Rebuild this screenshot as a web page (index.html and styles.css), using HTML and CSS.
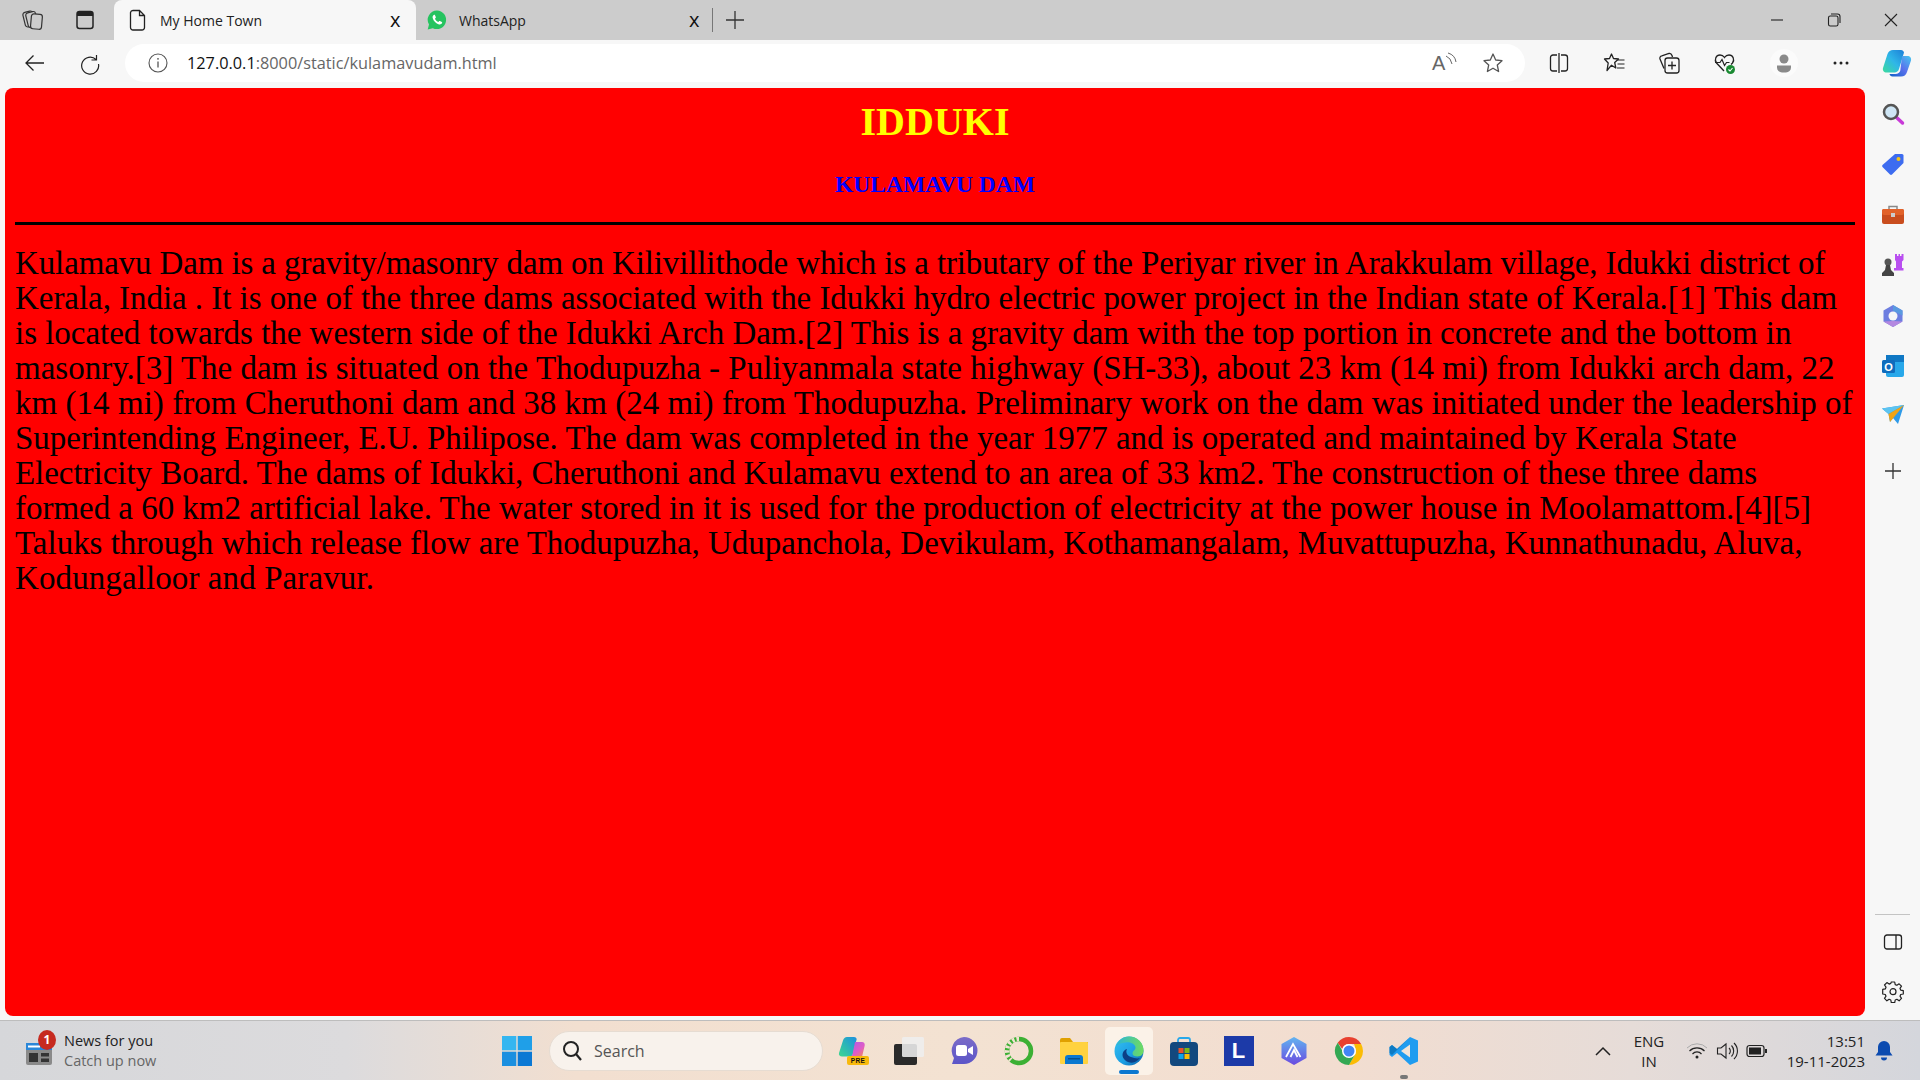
FILE: index.html
```html
<!DOCTYPE html>
<html lang="en">
<head>
<meta charset="utf-8">
<title>My Home Town</title>
<link rel="stylesheet" href="styles.css">
</head>
<body>
<div class="tabstrip">
  <div class="strip-icons">
    <svg width="24" height="24" viewBox="0 0 24 24"><g fill="#ccc" stroke="#333" stroke-width="1.200"><rect x="3" y="3.500" width="10" height="15" rx="2.500" transform="rotate(-14 8 11)"/><rect x="6" y="4" width="10" height="15" rx="2.500" transform="rotate(-14 11 12)"/><rect x="10" y="6" width="11" height="15" rx="2.500" transform="rotate(5 15 13)"/></g></svg>
    <svg width="24" height="24" viewBox="0 0 24 24"><rect x="4" y="3.500" width="16" height="17" rx="2.500" fill="none" stroke="#222" stroke-width="1.500"/><path d="M4 6a2.500 2.500 0 0 1 2.500-2.500h11A2.500 2.500 0 0 1 20 6v2H4z" fill="#222"/></svg>
  </div>
  <div class="tab tab-active">
    <svg width="18" height="22" viewBox="0 0 18 22"><path d="M4 1.500h6.500l5 5v12a2.500 2.500 0 0 1-2.500 2.500H4a2.500 2.500 0 0 1-2.500-2.500v-15A2.500 2.500 0 0 1 4 1.500zM10.500 1.500v5h5" fill="none" stroke="#222" stroke-width="1.300"/></svg>
    <span class="tab-title">My Home Town</span>
    <span class="tab-x">x</span>
  </div>
  <div class="tab">
    <svg width="22" height="22" viewBox="0 0 22 22"><path d="M11 1.500a9.300 9.300 0 0 0-8 14l-1.300 5 5.100-1.300A9.300 9.300 0 1 0 11 1.500z" fill="#25c35f"/><path d="M7.800 6c-.9.500-1.500 1.700-1.100 3.100.8 3 3.300 5.500 6.300 6.300 1.400.3 2.700-.3 3.100-1.300.2-.5.100-.9-.2-1.100l-2-1c-.4-.2-.7 0-.9.300l-.6.800c-1.500-.6-2.800-1.900-3.500-3.400l.7-.7c.3-.3.300-.6.200-.9l-.9-2c-.2-.3-.7-.3-1.100-.1z" fill="#fff"/></svg>
    <span class="tab-title">WhatsApp</span>
    <span class="tab-x">x</span>
  </div>
  <span class="tab-sep"></span>
  <svg class="newtab" width="20" height="20" viewBox="0 0 20 20"><path d="M10 1v18M1 10h18" stroke="#333" stroke-width="1.300"/></svg>
  <div class="window-ctrls">
    <svg width="16" height="16" viewBox="0 0 16 16"><path d="M2 8h12" stroke="#222" stroke-width="1.100"/></svg>
    <svg width="16" height="16" viewBox="0 0 16 16"><rect x="2.500" y="4" width="9.500" height="10" rx="1.800" fill="none" stroke="#222" stroke-width="1.100"/><path d="M5 2h6.500A2.500 2.500 0 0 1 14 4.500V11" fill="none" stroke="#222" stroke-width="1.100"/></svg>
    <svg width="16" height="16" viewBox="0 0 16 16"><path d="M2 2l12 12M14 2L2 14" stroke="#222" stroke-width="1.100"/></svg>
  </div>
</div>

<div class="toolbar">
  <div class="nav">
    <svg width="24" height="24" viewBox="0 0 24 24"><path d="M21 12H3M10.500 4.500L3 12l7.500 7.500" fill="none" stroke="#222" stroke-width="1.300"/></svg>
    <svg width="24" height="24" viewBox="0 0 24 24"><path d="M18.500 4v5h-5M18 8.500A8.500 8.500 0 1 0 20.500 13" fill="none" stroke="#222" stroke-width="1.200"/></svg>
  </div>
  <div class="address">
    <svg width="22" height="22" viewBox="0 0 22 22"><circle cx="11" cy="11" r="9" fill="none" stroke="#555" stroke-width="1.100"/><path d="M11 9.500v6" stroke="#555" stroke-width="1.300"/><circle cx="11" cy="6.800" r=".9" fill="#555"/></svg>
    <span class="url"><span class="url-host">127.0.0.1</span>:8000/static/kulamavudam.html</span>
    <span class="addr-right">
      <span class="readaloud">A<svg width="12" height="16" viewBox="0 0 12 16"><path d="M1 4q5 2 6 8M3 1q7 2 8 9" fill="none" stroke="#666" stroke-width="1"/></svg></span>
      <svg width="24" height="24" viewBox="0 0 24 24"><path d="M12 3l2.700 6 6.300.7-4.700 4.300 1.300 6.500L12 17.200 6.400 20.500l1.300-6.500L3 9.700 9.300 9z" fill="none" stroke="#555" stroke-width="1.300" stroke-linejoin="round"/></svg>
    </span>
  </div>
  <div class="tools">
    <svg width="22" height="22" viewBox="0 0 22 22"><path d="M9 3H5a2.500 2.500 0 0 0-2.500 2.500v11A2.500 2.500 0 0 0 5 19h4M13 3h4a2.500 2.500 0 0 1 2.500 2.500v11A2.500 2.500 0 0 1 17 19h-4M11 1v20" fill="none" stroke="#222" stroke-width="1.300"/></svg>
    <svg width="22" height="22" viewBox="0 0 22 22"><path d="M8.500 2l2 4.500 5 .5-3.800 3.500 1.100 5.500-4.300-2.800L4 18.500l1.200-7.500L1.500 7l5-.5z" fill="none" stroke="#222" stroke-width="1.300" stroke-linejoin="round"/><path d="M14.500 8h7M14.500 12h7M14 16h7.500" stroke="#222" stroke-width="1.200"/></svg>
    <svg width="22" height="22" viewBox="0 0 22 22"><path d="M6 16.500L2 7c-.5-1.500.3-2.800 1.800-3.200L11 1.500c1.500-.3 2.500.5 3 2l.5 1.500" fill="none" stroke="#222" stroke-width="1.300"/><rect x="7" y="6" width="14" height="15" rx="2.500" fill="#f7f7f7" stroke="#222" stroke-width="1.300"/><path d="M14 9.500v8M10 13.500h8" stroke="#222" stroke-width="1.300"/></svg>
    <svg width="24" height="24" viewBox="0 0 24 24"><path d="M11 20L3.500 12C1 8.500 3 4 7 4c2 0 3.500 1 4.500 2.500C12.500 5 14 4 16 4c4 0 6 4.500 3.500 8l-1.500 1.500" fill="none" stroke="#222" stroke-width="1.300"/><path d="M2 11.500h5l2-3 2.500 6 2-3h3" fill="none" stroke="#222" stroke-width="1.200"/><circle cx="17.500" cy="18.500" r="4.500" fill="#1a8a32"/><path d="M15.500 18.500l1.500 1.500 2.500-3" fill="none" stroke="#fff" stroke-width="1.100"/></svg>
    <svg width="28" height="30" viewBox="0 0 28 30"><circle cx="14" cy="15" r="14" fill="#fbfbfb"/><circle cx="14" cy="11" r="4.500" fill="#8a8a8a"/><path d="M7 17.500h14v2a5 5 0 0 1-5 5h-4a5 5 0 0 1-5-5z" fill="#8a8a8a"/></svg>
    <svg width="20" height="6" viewBox="0 0 20 6"><circle cx="4" cy="3" r="1.500" fill="#222"/><circle cx="10" cy="3" r="1.500" fill="#222"/><circle cx="16" cy="3" r="1.500" fill="#222"/></svg>
    <svg width="30" height="28" viewBox="0 0 30 28"><defs><linearGradient id="cp1" x1="1" y1="0" x2="0" y2="1"><stop offset="0" stop-color="#1c7fd8"/><stop offset=".5" stop-color="#2fb6e8"/><stop offset="1" stop-color="#3cdc9c"/></linearGradient><linearGradient id="cp2" x1="1" y1="0" x2="0" y2="1"><stop offset="0" stop-color="#46c8f0"/><stop offset=".5" stop-color="#5a70ec"/><stop offset="1" stop-color="#0f62c8"/></linearGradient></defs><path d="M11 1h8c1.600 0 2.600 1 3 2.500L17 20c-.6 2.200-2.400 3.500-4.500 3.500H4.500C2 23.500.3 21.500 1 19L5.500 5C6.500 2.500 8.500 1 11 1z" fill="url(#cp1)"/><path d="M20 7h5.500C28 7 29.600 9 29 11.500L25 23c-1 3-3 4.500-6 4.500h-8.500c-1.600 0-2.700-1-3-2.500h6c2.400 0 4.200-1.400 4.800-3.500z" fill="url(#cp2)"/></svg>
  </div>
</div>

<div class="main">
  <div class="page">
    <h1 class="title">IDDUKI</h1>
    <h2 class="subtitle">KULAMAVU DAM</h2>
    <hr class="rule">
    <p class="article">
      <span class="line l1">Kulamavu Dam is a gravity/masonry dam on Kilivillithode which is a tributary of the Periyar river in Arakkulam village, Idukki district of</span>
      <span class="line l2">Kerala, India . It is one of the three dams associated with the Idukki hydro electric power project in the Indian state of Kerala.[1] This dam</span>
      <span class="line l3">is located towards the western side of the Idukki Arch Dam.[2] This is a gravity dam with the top portion in concrete and the bottom in</span>
      <span class="line">masonry.[3] The dam is situated on the Thodupuzha - Puliyanmala state highway (SH-33), about 23 km (14 mi) from Idukki arch dam, 22</span>
      <span class="line l5">km (14 mi) from Cheruthoni dam and 38 km (24 mi) from Thodupuzha. Preliminary work on the dam was initiated under the leadership of</span>
      <span class="line l6">Superintending Engineer, E.U. Philipose. The dam was completed in the year 1977 and is operated and maintained by Kerala State</span>
      <span class="line l7">Electricity Board. The dams of Idukki, Cheruthoni and Kulamavu extend to an area of 33 km2. The construction of these three dams</span>
      <span class="line l8">formed a 60 km2 artificial lake. The water stored in it is used for the production of electricity at the power house in Moolamattom.[4][5]</span>
      <span class="line l9">Taluks through which release flow are Thodupuzha, Udupanchola, Devikulam, Kothamangalam, Muvattupuzha, Kunnathunadu, Aluva,</span>
      <span class="line l10">Kodungalloor and Paravur.</span>
    </p>
  </div>
  <aside class="sidebar">
    <div class="side-top">
      <svg width="24" height="24" viewBox="0 0 24 24"><path d="M14.500 14.500l7 6.500" stroke="#c83ad8" stroke-width="3.500" stroke-linecap="round"/><circle cx="10" cy="10" r="7" fill="#cfe6f5" stroke="#555" stroke-width="2.500"/></svg>
      <svg width="24" height="24" viewBox="0 0 24 24"><path d="M14 2h7a1.500 1.500 0 0 1 1.500 1.500V11L11 22.500a1.500 1.500 0 0 1-2 0L1.500 15a1.500 1.500 0 0 1 0-2z" fill="#3d6cf0"/><circle cx="17.500" cy="7" r="2" fill="#f5c518"/></svg>
      <svg width="24" height="24" viewBox="0 0 24 24"><path d="M8 6V3.500h8V6" fill="none" stroke="#888" stroke-width="1.500"/><rect x="1" y="6" width="22" height="15" rx="2" fill="#c94d1e"/><rect x="1" y="6" width="22" height="6" rx="2" fill="#e2622a"/><rect x="10" y="10" width="4" height="4" fill="#ccc"/></svg>
      <svg width="24" height="24" viewBox="0 0 24 24"><path d="M14 1h2v2h1.500V1h1.500v2h1.500V1h2v6l-1.500 1.500V15h1.500v2.500H13V15h2V8.500L14 7z" fill="#b94ff0"/><circle cx="7" cy="9" r="3.500" fill="#555"/><path d="M5 12h4l1 5 3 3v3H1v-3l3-3z" fill="#444"/></svg>
      <svg width="24" height="24" viewBox="0 0 24 24"><path d="M12 1l9.500 5.500v11L12 23l-9.500-5.500v-11z" fill="#6d7ee0"/><path d="M12 1l9.500 5.500v5L12 7z" fill="#5a9ae0"/><path d="M2.500 17.500L12 23l9.500-5.500L12 17z" fill="#b488e0"/><circle cx="12" cy="12" r="4.500" fill="#f7f7f7"/></svg>
      <svg width="24" height="24" viewBox="0 0 24 24"><rect x="5" y="1" width="18" height="22" rx="2" fill="#28a8ea"/><rect x="5" y="1" width="18" height="7" fill="#0f78c4"/><rect x="1" y="6" width="13" height="13" rx="1.500" fill="#0f6cbd"/><text class="o-letter" x="7.500" y="16.500" text-anchor="middle">O</text></svg>
      <svg width="24" height="22" viewBox="0 0 24 22"><path d="M1 4.500L23 1l-6 19-5-6-3 4-1.500-8z" fill="#2f9be8"/><path d="M1 4.500L23 1 7.500 10z" fill="#5cc4f0"/><path d="M7.500 10L23 1 9 18z" fill="#f0a416"/></svg>
      <svg class="side-plus" width="20" height="20" viewBox="0 0 20 20"><path d="M10 2v16M2 10h16" stroke="#333" stroke-width="1.300"/></svg>
    </div>
    <div class="side-bottom">
      <span class="side-rule"></span>
      <svg width="20" height="18" viewBox="0 0 20 18"><rect x="1.500" y="2" width="17" height="14" rx="2.500" fill="none" stroke="#222" stroke-width="1.300"/><path d="M13 2v14" stroke="#222" stroke-width="1.300"/></svg>
      <svg width="22" height="22" viewBox="0 0 22 22"><path d="M9.300 1.500h3.400l.5 2.600 1.700.7 2.200-1.500 2.400 2.400-1.500 2.200.7 1.700 2.600.5v3.400l-2.600.5-.7 1.700 1.500 2.200-2.400 2.400-2.200-1.500-1.700.7-.5 2.600H9.300l-.5-2.600-1.700-.7-2.200 1.500-2.400-2.400 1.500-2.200-.7-1.700-2.600-.5V8.900l2.600-.5.7-1.700-1.500-2.200 2.400-2.400 2.200 1.500 1.700-.7z" fill="none" stroke="#222" stroke-width="1.200" stroke-linejoin="round" transform="translate(0 -.5)"/><circle cx="11" cy="10.700" r="3" fill="none" stroke="#222" stroke-width="1.200"/></svg>
    </div>
  </aside>
</div>

<footer class="taskbar">
  <div class="news">
    <span class="news-icon">
      <svg width="28" height="26" viewBox="0 0 28 26"><rect x="1" y="3" width="26" height="22" rx="2" fill="#8a8a8a"/><rect x="1" y="3" width="26" height="7" fill="#2b87d8"/><rect x="3" y="5.500" width="12" height="2" fill="#fff"/><rect x="4" y="13" width="9" height="9" fill="#333"/><rect x="16" y="13" width="8" height="3.500" fill="#333"/><rect x="16" y="18.500" width="8" height="3.500" fill="#333"/></svg>
      <span class="badge">1</span>
    </span>
    <span class="news-text"><span class="news-head">News for you</span><span class="news-sub">Catch up now</span></span>
  </div>
  <svg width="30" height="30" viewBox="0 0 30 30"><rect x="0" y="0" width="14.300" height="14.300" fill="#35b6f0"/><rect x="15.700" y="0" width="14.300" height="14.300" fill="#1f9fe8"/><rect x="0" y="15.700" width="14.300" height="14.300" fill="#1a8fe0"/><rect x="15.700" y="15.700" width="14.300" height="14.300" fill="#0b78d4"/></svg>
  <div class="search">
    <svg width="22" height="24" viewBox="0 0 22 24"><circle cx="10" cy="10" r="7" fill="none" stroke="#222" stroke-width="2"/><path d="M15 15l5 6" stroke="#222" stroke-width="2.200"/></svg>
    <span>Search</span>
  </div>
  <div class="dock">
    <span class="slot"><svg width="32" height="30" viewBox="0 0 32 30"><defs><linearGradient id="pr1" x1="0" y1="1" x2="1" y2="0"><stop offset="0" stop-color="#3cd890"/><stop offset="1" stop-color="#1c90e0"/></linearGradient><linearGradient id="pr2" x1="0" y1="0" x2="1" y2="1"><stop offset="0" stop-color="#a85ce8"/><stop offset=".6" stop-color="#e05cc8"/><stop offset="1" stop-color="#f29048"/></linearGradient></defs><path d="M9 1h7c1.500 0 2.300.8 2.700 2L15 18c-.5 1.800-2 2.500-4 2.500H4C2 20.500.4 19 1 17L5 4.500C5.700 2.300 7 1 9 1z" fill="url(#pr1)"/><path d="M17 6h7c2 0 3 1.500 2.700 3.500L24 21H10.500c1.800 0 3.500-.8 4-2.500z" fill="url(#pr2)"/><rect x="9" y="20" width="22" height="9" rx="2" fill="#f8b90c"/><text class="pre" x="20" y="27" text-anchor="middle">PRE</text></svg></span>
    <span class="slot"><svg width="32" height="30" viewBox="0 0 32 30"><rect x="1" y="8" width="23" height="21" rx="2" fill="#2a2a2a"/><rect x="9" y="1" width="22" height="20" rx="1.500" fill="#eeeeee" opacity=".88"/></svg></span>
    <span class="slot"><svg width="30" height="30" viewBox="0 0 30 30"><defs><linearGradient id="tm" x1="0" y1="0" x2="0" y2="1"><stop offset="0" stop-color="#7b6cc8"/><stop offset="1" stop-color="#5b55c8"/></linearGradient></defs><path d="M15 1a13.500 13.500 0 0 1 0 27H3l2-6A13.500 13.500 0 0 1 15 1z" fill="url(#tm)"/><rect x="7" y="9" width="11" height="11" rx="2.500" fill="#fff"/><path d="M19 13l5-3v9l-5-3z" fill="#fff"/></svg></span>
    <span class="slot"><svg width="30" height="30" viewBox="0 0 30 30"><circle cx="15" cy="15" r="12" fill="none" stroke="#3cb034" stroke-width="4.500"/><path d="M15 3A12 12 0 0 0 7 24" fill="none" stroke="#f3e2d4" stroke-width="4.500" stroke-dasharray="2.500 2"/></svg></span>
    <span class="slot"><svg width="30" height="28" viewBox="0 0 30 28"><path d="M1 3a2 2 0 0 1 2-2h8l3 4h15v4H1z" fill="#e0a000"/><rect x="1" y="5" width="28" height="22" rx="1" fill="#ffd23f"/><path d="M6 27v-6a3 3 0 0 1 3-3h12a3 3 0 0 1 3 3v6z" fill="#0a78d0"/><rect x="9" y="21" width="12" height="1.500" fill="#05508c"/></svg></span>
    <span class="slot"><span class="edge-slot">
      <svg width="30" height="30" viewBox="0 0 30 30"><defs><linearGradient id="eg" x1="0" y1="0" x2="1" y2="1"><stop offset="0" stop-color="#35c1f1"/><stop offset=".6" stop-color="#1b9de2"/><stop offset="1" stop-color="#0c59a4"/></linearGradient><linearGradient id="eg2" x1="0" y1="0" x2="1" y2="0"><stop offset="0" stop-color="#2bb5d8"/><stop offset="1" stop-color="#6fdc5e"/></linearGradient></defs><circle cx="15" cy="15" r="14.500" fill="url(#eg)"/><path d="M2 11C4 4 9 .5 15 .5c8 0 14.500 6 14.500 14 0 3-2 6-6 6-3 0-5-1-5-3 0-3 3-3 3-6 0-3-5-6-10-5C7 7 4 8 2 11z" fill="url(#eg2)"/><path d="M17 21c-3-1-6-4-4-8-4 1-6 6-3 10 2 3 9 7 16-1-3 1-6 0-9-1z" fill="#0c3f86"/></svg>
      <span class="edge-bar"></span>
    </span></span>
    <span class="slot"><svg width="30" height="30" viewBox="0 0 30 30"><path d="M9 8V4a2 2 0 0 1 2-2h8a2 2 0 0 1 2 2v4" fill="none" stroke="#28a8ea" stroke-width="1.800"/><rect x="1" y="6" width="28" height="24" rx="4" fill="#12487e"/><rect x="9.500" y="12" width="5" height="5" fill="#e8502a"/><rect x="15.500" y="12" width="5" height="5" fill="#7cb518"/><rect x="9.500" y="18" width="5" height="5" fill="#0ea5e9"/><rect x="15.500" y="18" width="5" height="5" fill="#fbbc05"/></svg></span>
    <span class="slot"><span class="l-app">L</span></span>
    <span class="slot"><svg width="30" height="30" viewBox="0 0 30 30"><defs><linearGradient id="ac" x1="0" y1="0" x2="0" y2="1"><stop offset="0" stop-color="#62b4f0"/><stop offset="1" stop-color="#6a4ae0"/></linearGradient></defs><path d="M15 1l12.500 7v14L15 29 2.500 22V8z" fill="url(#ac)"/><path d="M7 21L14 8l7.500 13M11.500 21L15 14l3.500 7" fill="none" stroke="#fff" stroke-width="1.800"/></svg></span>
    <span class="slot"><svg width="30" height="30" viewBox="0 0 30 30"><path d="M15 1a14 14 0 0 1 12.120 7H15a7 7 0 0 0-6.700 5L3.700 6.700A14 14 0 0 1 15 1z" fill="#e8402f"/><path d="M27.120 8A14 14 0 0 1 15 29l6.060-10.500A7 7 0 0 0 21.060 11.500 7 7 0 0 0 20 8z" fill="#fbbc05"/><path d="M3.700 6.700l6.240 10.800A7 7 0 0 0 21.060 18.500L15 29A14 14 0 0 1 3.700 6.700z" fill="#34a853"/><circle cx="15" cy="15" r="7" fill="#fff"/><circle cx="15" cy="15" r="5.500" fill="#4285f4"/></svg></span>
    <span class="slot vscode-slot">
      <svg width="30" height="30" viewBox="0 0 30 30"><path d="M21 1l8 3.500v21L21 29 8 17l-5 4-2.500-2V11L3 9l5 4z" fill="#1f9cf0"/><path d="M21 8.500L12 15l9 6.500z" fill="#f1e4d8"/><path d="M21 1L3 19l-2.500-2V11L3 9l5 4z" fill="#0a72b8" opacity=".8"/></svg>
      <span class="run-dot"></span>
    </span>
  </div>
  <div class="tray">
    <svg width="18" height="10" viewBox="0 0 18 10"><path d="M2 9l7-7 7 7" fill="none" stroke="#222" stroke-width="1.500"/></svg>
    <span class="lang">ENG<br>IN</span>
    <div class="tray-icons">
      <svg width="22" height="18" viewBox="0 0 22 18"><path d="M1 6a14 14 0 0 1 20 0" fill="none" stroke="#aaa" stroke-width="1"/><path d="M3.500 9a10.500 10.500 0 0 1 15 0M6.500 12a6 6 0 0 1 9 0" fill="none" stroke="#222" stroke-width="1.200"/><circle cx="11" cy="15" r="1.500" fill="#222"/></svg>
      <svg width="22" height="18" viewBox="0 0 22 18"><path d="M1.500 6h3.500l5-4v14l-5-4H1.500z" fill="none" stroke="#222" stroke-width="1.100"/><path d="M13 6a4 4 0 0 1 0 6M15.500 3.500a8 8 0 0 1 0 11M18 1a11 11 0 0 1 0 16" fill="none" stroke="#222" stroke-width="1.100"/></svg>
      <svg width="22" height="14" viewBox="0 0 22 14"><rect x="1" y="1.500" width="17" height="11" rx="2.500" fill="none" stroke="#222" stroke-width="1.200"/><rect x="3" y="3.500" width="12" height="7" fill="#222"/><rect x="19" y="5" width="2" height="4" fill="#222"/></svg>
    </div>
    <span class="clock"><span>13:51</span><span>19-11-2023</span></span>
    <svg width="18" height="22" viewBox="0 0 18 22"><path d="M9 1a6 6 0 0 1 6 6v5l2.500 3.500H.5L3 12V7a6 6 0 0 1 6-6z" fill="#0c4bb0"/><path d="M6 17.500h6a3 3 0 0 1-6 0z" fill="#0c4bb0"/></svg>
  </div>
</footer>
</body>
</html>
```
FILE: styles.css
```css
* { box-sizing: border-box; }
html, body { margin: 0; height: 100%; }
body {
  width: 1920px;
  height: 1080px;
  overflow: hidden;
  display: flex;
  flex-direction: column;
  background: #f7f7f7;
  font-family: "Open Sans", "Noto Sans", sans-serif;
  color: #1c1c1c;
}
svg { display: block; flex: none; }

.tabstrip {
  height: 40px;
  flex: none;
  display: flex;
  align-items: flex-end;
  background: #cccccc;
}
.strip-icons {
  width: 114px;
  height: 40px;
  display: flex;
  align-items: center;
  gap: 28px;
  padding-left: 21px;
  flex: none;
}
.tab {
  width: 299px;
  height: 40px;
  flex: none;
  display: flex;
  align-items: center;
  gap: 11px;
  padding: 0 8px 0 10px;
  font-size: 14px;
  border-radius: 8px 8px 0 0;
}
.tab-active {
  width: 302px;
  background: #f7f7f7;
  padding-left: 15px;
  gap: 13px;
}
.tab-title { flex: 1; color: #222; }
.tab-x { font-size: 20px; line-height: 20px; width: 14px; color: #111; margin-right: 4px; }
.tab-sep { width: 1px; height: 24px; background: #777; align-self: center; flex: none; margin-left: -3px; }
.newtab { align-self: center; margin-left: 12px; }
.window-ctrls {
  margin-left: auto;
  height: 40px;
  align-self: center;
  display: flex;
  align-items: center;
  gap: 41px;
  padding-right: 21px;
}

.toolbar {
  height: 48px;
  flex: none;
  display: flex;
  align-items: center;
  padding: 0 0 3px;
}
.nav {
  width: 125px;
  display: flex;
  align-items: center;
  gap: 31px;
  padding-left: 23px;
  flex: none;
}
.address {
  width: 1400px;
  height: 38px;
  flex: none;
  display: flex;
  align-items: center;
  background: #fff;
  border-radius: 19px;
  padding: 0 20px 0 22px;
  gap: 18px;
}
.url { color: #666; font-size: 16.300px; }
.url-host { color: #111; }
.addr-right { margin-left: auto; display: flex; align-items: center; gap: 27px; }
.readaloud {
  display: flex;
  color: #666;
  font-size: 20px;
  line-height: 22px;
  width: 22px;
  font-family: "Liberation Sans", sans-serif;
}
.tools {
  flex: 1;
  display: flex;
  align-items: center;
  gap: 33px;
  padding-left: 23px;
}
.tools > svg:last-child { margin-left: -2px; }

.main { flex: 1; display: flex; min-height: 0; }
.page {
  width: 1860px;
  margin-left: 5px;
  height: 928px;
  flex: none;
  background: #ff0000;
  border-radius: 8px;
  padding: 8px 10px;
  font-family: "Liberation Serif", serif;
  overflow: hidden;
}
.title {
  margin: 0;
  padding-top: 3.500px;
  text-align: center;
  font-size: 40px;
  line-height: 44px;
  color: #ffff00;
  font-weight: 700;
}
.subtitle {
  margin: 27.500px 0 0;
  text-align: center;
  font-size: 23.500px;
  line-height: 26px;
  color: #0000ff;
  font-weight: 700;
}
.rule {
  margin: 24.500px 0 0;
  border: 0;
  height: 3px;
  background: #000;
}
.article {
  margin: 21px 0 0;
  font-size: 33px;
  line-height: 35px;
  white-space: nowrap;
  color: #000;
}
.line { display: block; }
.l1 { letter-spacing: -.125px; }
.l2 { letter-spacing: -.045px; }
.l3 { letter-spacing: -.02px; }
.l5 { letter-spacing: .04px; }
.l6 { letter-spacing: -.03px; }
.l7 { letter-spacing: -.04px; }
.l8 { letter-spacing: -.03px; }
.l9 { letter-spacing: -.01px; }
.l10 { letter-spacing: .1px; }

.sidebar {
  flex: 1;
  display: flex;
  flex-direction: column;
  align-items: center;
  justify-content: space-between;
  height: 932px;
}
.side-top { display: flex; flex-direction: column; align-items: center; gap: 26.400px; padding-top: 14px; }
.side-plus { margin-top: 8px; }
.side-bottom { display: flex; flex-direction: column; align-items: center; gap: 30px; padding-bottom: 17px; }
.side-rule { width: 35px; height: 1px; background: #c4c4c4; margin-bottom: -12px; }
.o-letter { font: 700 11px "Liberation Sans", sans-serif; fill: #fff; }

.taskbar {
  height: 60px;
  flex: none;
  display: flex;
  align-items: center;
  border-top: 1px solid #bdbdbd;
  background: linear-gradient(90deg, #d6d7da 0%, #dcdbdd 18%, #f2dfd0 30%, #f3e2d2 50%, #f2ddd0 70%, #e6dcd8 85%, #d4d6dc 100%);
  font-size: 14.500px;
}
.news { width: 502px; display: flex; align-items: center; gap: 11px; padding-left: 25px; flex: none; }
.news-icon { position: relative; display: block; width: 28px; height: 26px; margin-top: 4px; }
.badge {
  position: absolute;
  left: 13px;
  top: -10px;
  width: 18px;
  height: 20px;
  border-radius: 50%;
  background: #c62a20;
  color: #fff;
  font-size: 12px;
  font-weight: 700;
  text-align: center;
  line-height: 20px;
}
.news-text { display: flex; flex-direction: column; line-height: 20px; }
.news-head { color: #222; }
.news-sub { color: #666; }
.search {
  width: 274px;
  height: 40px;
  margin: 0 3px 0 17px;
  flex: none;
  display: flex;
  align-items: center;
  gap: 11px;
  padding-left: 11px;
  background: #f8f2ec;
  border: 1px solid #e6dcd2;
  border-radius: 20px;
  color: #555;
  font-size: 16px;
}
.dock { display: flex; align-items: center; flex: none; height: 59px; }
.slot { width: 55px; height: 59px; flex: none; display: flex; align-items: center; justify-content: center; position: relative; }
.pre { font: 700 6.500px "Liberation Sans", sans-serif; fill: #111; letter-spacing: .4px; }
.edge-slot {
  display: flex;
  align-items: center;
  justify-content: center;
  position: relative;
  width: 48px;
  height: 48px;
  border-radius: 5px;
  background: #fbf2e8;
}
.edge-bar { position: absolute; left: 14px; bottom: 1px; width: 20px; height: 4px; border-radius: 2px; background: #0c78d0; }
.l-app {
  width: 30px;
  height: 30px;
  flex: none;
  background: #1c3aa8;
  color: #fff;
  font: 700 22px/30px "Liberation Sans", sans-serif;
  text-align: center;
}
.run-dot { position: absolute; left: 24px; bottom: 1px; width: 8px; height: 4px; border-radius: 2px; background: #777; }
.tray { flex: 1; display: flex; align-items: center; height: 100%; padding-left: 163px; color: #222; min-width: 0; }
.lang { width: 62px; margin-left: 6px; text-align: center; line-height: 20px; font-size: 15px; }
.tray-icons { display: flex; align-items: center; gap: 8px; margin-left: 6px; }
.clock { display: flex; flex-direction: column; align-items: flex-end; width: 100px; line-height: 20px; margin-left: -3px; font-size: 15px; }
.tray > svg:last-child { margin-left: 10px; }
```
